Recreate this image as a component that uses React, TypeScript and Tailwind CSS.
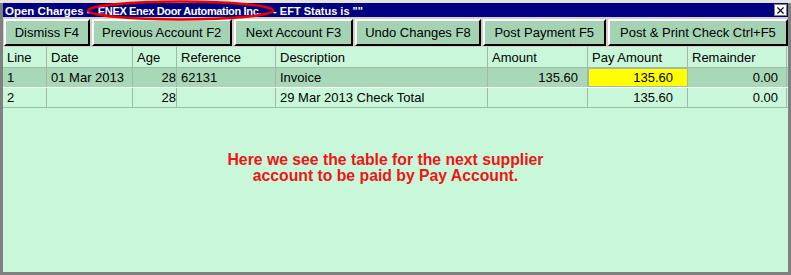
import { X } from 'lucide-react'

const cols = 'grid grid-cols-[44px_86px_44px_99px_212px_100px_100px_99px]'

const buttons = [
    { label: 'Dismiss F4', w: 'w-[86px]' },
    { label: 'Previous Account F2', w: 'w-[141px]' },
    { label: 'Next Account F3', w: 'w-[120px]' },
    { label: 'Undo Changes F8', w: 'w-[126px]' },
    { label: 'Post Payment F5', w: 'w-[124px]' },
    { label: 'Post & Print Check Ctrl+F5', w: 'w-[181px]' },
]

function Cell({ children, className = '' }: { children?: React.ReactNode; className?: string }) {
    return <div className={`border-r border-[#9fbaa8] px-1 truncate ${className}`}>{children}</div>
}

export default function App() {
    return (
        <div className="relative w-[791px] h-[275px] bg-[#e6e4de] pt-[3px] font-['Liberation_Sans',Arial,sans-serif] text-black">
            <div className="h-[272px] flex flex-col border-l-[3px] border-r-[3px] border-b-[3px] border-[#808080] bg-[#c9f7d9]">
                {/* title bar */}
                <div className="h-[14px] bg-[#000080] flex items-center justify-between pl-[2px] pr-[1px]">
                    <span className="text-white font-bold leading-none whitespace-pre">
                        <span className="text-[11.5px]">Open Charges - </span>
                        <span className="text-[11px] tracking-[-0.35px] ml-[4px]">ENEX Enex Door Automation Inc.</span>
                        <span className="text-[11px] ml-[12px]">{'- EFT Status is ""'}</span>
                    </span>
                    <div className="w-[13px] h-[12px] bg-white border border-[#808080] flex items-center justify-center">
                        <X size={11} strokeWidth={2.5} />
                    </div>
                </div>

                {/* toolbar */}
                <div className="h-[30px] bg-[#d4d0c8] flex gap-[2px] pl-[1px] pt-[2px] pb-[1px]">
                    {buttons.map((b) => (
                        <div
                            key={b.label}
                            className={`${b.w} h-[27px] bg-[#a4d3b4] border-t-2 border-l-2 border-t-white border-l-white border-b-2 border-r-2 border-b-black border-r-black flex items-center justify-center text-[13px] whitespace-nowrap`}
                        >
                            {b.label}
                        </div>
                    ))}
                </div>

                {/* table */}
                <div className="text-[13px] leading-none">
                    <div className={`${cols} h-[21px] border-b border-[#9fbaa8] [&>div]:flex [&>div]:items-center`}>
                        <Cell>Line</Cell>
                        <Cell>Date</Cell>
                        <Cell>Age</Cell>
                        <Cell>Reference</Cell>
                        <Cell>Description</Cell>
                        <Cell>Amount</Cell>
                        <Cell>Pay Amount</Cell>
                        <Cell>Remainder</Cell>
                    </div>
                    <div className={`${cols} h-[20px] bg-[#a9d8b8] border-b border-white [&>div]:flex [&>div]:items-center`}>
                        <Cell className="px-0">1</Cell>
                        <Cell className="px-0">01 Mar 2013</Cell>
                        <Cell className="justify-end pr-0">28</Cell>
                        <Cell className="px-0">62131</Cell>
                        <Cell className="px-0">Invoice</Cell>
                        <Cell className="justify-end pr-[9px]">135.60</Cell>
                        <Cell className="justify-end pr-[14px] bg-[#ffff00] border border-[#9fbaa8]">135.60</Cell>
                        <Cell className="justify-end pr-[8px]">0.00</Cell>
                    </div>
                    <div className={`${cols} h-[20px] border-b border-[#9fbaa8] [&>div]:flex [&>div]:items-center`}>
                        <Cell className="px-0">2</Cell>
                        <Cell />
                        <Cell className="justify-end pr-0">28</Cell>
                        <Cell />
                        <Cell className="px-0">29 Mar 2013 Check Total</Cell>
                        <Cell />
                        <Cell className="justify-end pr-[14px]">135.60</Cell>
                        <Cell className="justify-end pr-[8px]">0.00</Cell>
                    </div>
                </div>

                {/* annotation */}
                <div className="flex-1 flex items-start justify-center pt-[44px] pr-[20px]">
                    <p className="text-center text-[#f01414] font-bold text-[15.75px] leading-[16px]">
                        Here we see the table for the next supplier
                        <br />
                        account to be paid by Pay Account.
                    </p>
                </div>
            </div>

            {/* red highlight ring over the title */}
            <svg className="absolute left-[85px] top-0 pointer-events-none" width="192" height="22" viewBox="0 0 192 22">
                <ellipse cx="95.5" cy="10.5" rx="92.5" ry="9" fill="none" stroke="#ee0000" strokeWidth="2.5" />
            </svg>
        </div>
    )
}
